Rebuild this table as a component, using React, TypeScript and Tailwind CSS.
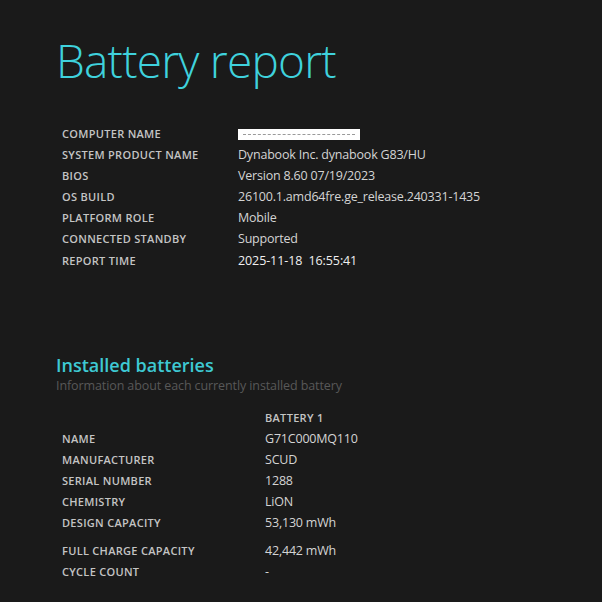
import React from 'react';

const FONT = "font-['Open_Sans','Noto_Sans',sans-serif]";

const systemRows: { label: string; value: string; strong?: boolean }[] = [
  { label: 'SYSTEM PRODUCT NAME', value: 'Dynabook Inc. dynabook G83/HU' },
  { label: 'BIOS', value: 'Version 8.60 07/19/2023' },
  { label: 'OS BUILD', value: '26100.1.amd64fre.ge_release.240331-1435' },
  { label: 'PLATFORM ROLE', value: 'Mobile' },
  { label: 'CONNECTED STANDBY', value: 'Supported' },
  { label: 'REPORT TIME', value: '2025-11-18\u00a0\u00a016:55:41', strong: true },
];

const batteryRows: { label: string; value: string; gap?: boolean }[] = [
  { label: 'NAME', value: 'G71C000MQ110' },
  { label: 'MANUFACTURER', value: 'SCUD' },
  { label: 'SERIAL NUMBER', value: '1288' },
  { label: 'CHEMISTRY', value: 'LiON' },
  { label: 'DESIGN CAPACITY', value: '53,130 mWh' },
  { label: 'FULL CHARGE CAPACITY', value: '42,442 mWh', gap: true },
  { label: 'CYCLE COUNT', value: '-' },
];

const Label: React.FC<{ className?: string; children: React.ReactNode }> = ({ className = '', children }) => (
  <span className={`text-[11px] font-semibold tracking-[0.3px] text-[#c4c4c4] ${className}`}>{children}</span>
);

export default function App() {
  return (
    <div className={`${FONT} w-[602px] h-[602px] overflow-hidden bg-[#1a1a1a] pl-[56px] pt-[30px]`}>
      {/* Title */}
      <h1 className="text-[46px] leading-[60px] font-light tracking-[-0.8px] text-[#3fd2dd]">Battery report</h1>

      {/* System info */}
      <div className="mt-[34px] pl-[6px] flex flex-col">
        <div className="flex items-center h-[21px]">
          <Label className="w-[176px]">COMPUTER NAME</Label>
          <div className="w-[122px] h-[11px] bg-white flex items-center px-[5px]">
            <div className="w-full border-t border-dashed border-[#9a9a9a]" />
          </div>
        </div>
        {systemRows.map((r) => (
          <div key={r.label} className="flex items-center h-[21px] last:h-[22px] last:pt-[1px]">
            <Label className="w-[176px]">{r.label}</Label>
            <span
              className={
                r.strong
                  ? 'text-[12.5px] font-medium tracking-[-0.1px] text-[#f0f0f0]'
                  : 'text-[12.5px] tracking-[-0.2px] text-[#d4d4d4]'
              }
            >
              {r.value}
            </span>
          </div>
        ))}
      </div>

      {/* Installed batteries */}
      <h2 className="mt-[82px] text-[18px] leading-[22px] font-semibold text-[#3ec9d3]">Installed batteries</h2>
      <p className="mt-[1px] text-[12.5px] leading-[18px] tracking-[-0.1px] text-[#585858]">
        Information about each currently installed battery
      </p>

      <div className="mt-[13px] pl-[6px] flex flex-col">
        <div className="flex items-center h-[21px]">
          <Label className="ml-[203px]">BATTERY 1</Label>
        </div>
        {batteryRows.map((r) => (
          <div key={r.label} className={`flex items-center ${r.gap ? 'h-[28px] pt-[7px]' : 'h-[21px]'}`}>
            <Label className="w-[203px]">{r.label}</Label>
            <span className="text-[12.5px] tracking-[-0.2px] text-[#d4d4d4]">{r.value}</span>
          </div>
        ))}
      </div>
    </div>
  );
}
